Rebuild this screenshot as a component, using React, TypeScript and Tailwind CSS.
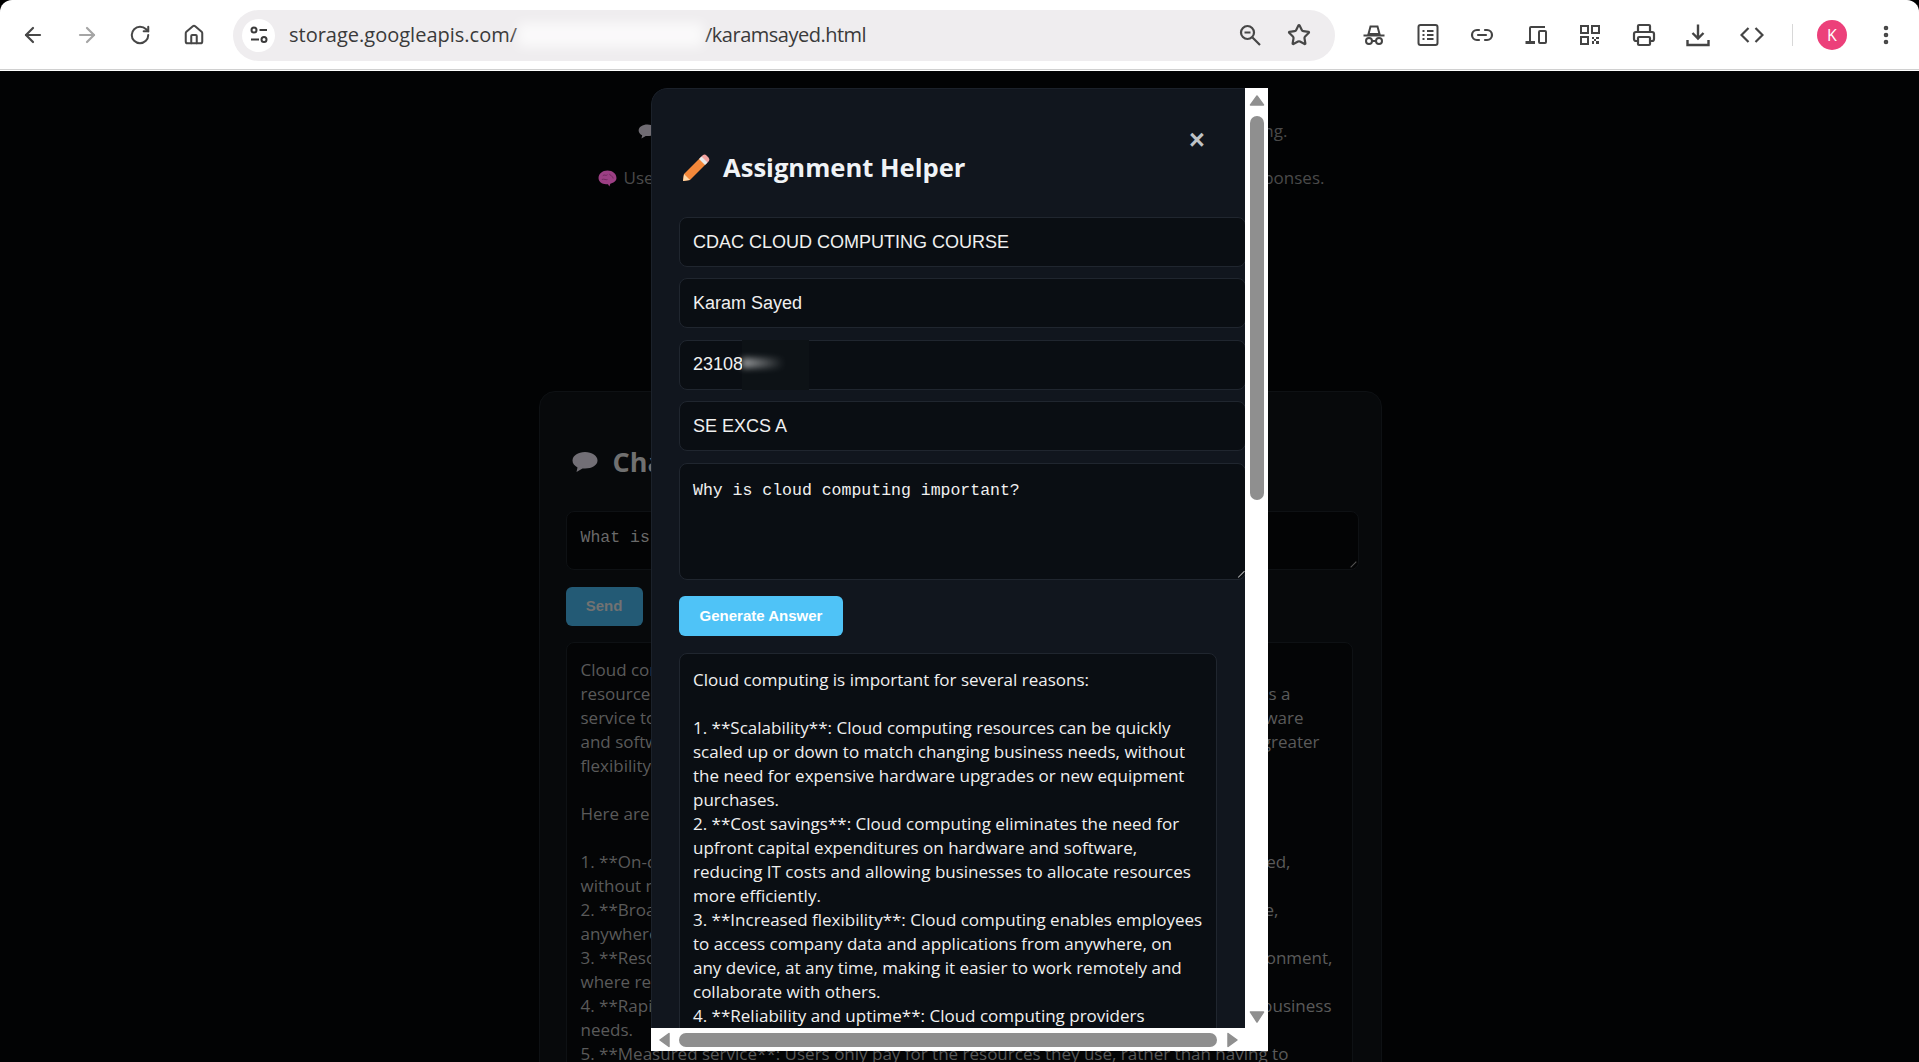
import React from 'react';
import { ArrowLeft, ArrowRight, RotateCw, Home, Star, Link2, Printer, EllipsisVertical } from 'lucide-react';

const sans = "font-['Open_Sans','Noto_Sans',sans-serif]";

// right = end of the line showing past the modal, inset = gap to the box's right edge
const chatLines: { left: string; right?: string; inset?: number }[] = [
  { left: 'Cloud computing' },
  { left: 'resources over', right: 'as a', inset: 47 },
  { left: 'service to users', right: 'ware', inset: 34 },
  { left: 'and software', right: 'greater', inset: 18 },
  { left: 'flexibility' },
  { left: '' },
  { left: 'Here are the' },
  { left: '' },
  { left: '1. **On-demand', right: 'ed,', inset: 47 },
  { left: 'without manual' },
  { left: '2. **Broad', right: 'e,', inset: 59 },
  { left: 'anywhere' },
  { left: '3. **Resource', right: 'onment,', inset: 5 },
  { left: 'where resources' },
  { left: '4. **Rapid', right: 'business', inset: 6 },
  { left: 'needs.' },
  { left: '5. **Measured service**: Users only pay for the resources they use, rather than having to' },
];

const answer = [
  'Cloud computing is important for several reasons:',
  '',
  '1. **Scalability**: Cloud computing resources can be quickly',
  'scaled up or down to match changing business needs, without',
  'the need for expensive hardware upgrades or new equipment',
  'purchases.',
  '2. **Cost savings**: Cloud computing eliminates the need for',
  'upfront capital expenditures on hardware and software,',
  'reducing IT costs and allowing businesses to allocate resources',
  'more efficiently.',
  '3. **Increased flexibility**: Cloud computing enables employees',
  'to access company data and applications from anywhere, on',
  'any device, at any time, making it easier to work remotely and',
  'collaborate with others.',
  '4. **Reliability and uptime**: Cloud computing providers',
];

function Bubble({ className }: { className: string }) {
  return (
    <svg viewBox="0 0 28 24" className={className}>
      <path d="M14 2C7 2 1.500 5.600 1.500 10.500c0 3 2 5.400 5 6.900L5.500 22l6-3.600c.8.100 1.700.100 2.500.100 7 0 12.500-3.400 12.500-8S21 2 14 2z" fill="#b9b3bd" />
    </svg>
  );
}

function Brain() {
  return (
    <svg viewBox="0 0 20 18" className="w-[19px] h-[17px]">
      <path d="M10 0.500C4.500 0.500 0.500 4 0.500 8.500c0 4 3.500 6.500 8 6.500h2l1.500 2.500 1-3c4-.8 6.500-3 6.500-6C19.500 4 15.500 0.500 10 0.500z" fill="#9c3f84" />
      <path d="M5 6c2-2 3 1 5-1M4 10c3-1 4 1 6 0M12 4c1 3 4 2 4 5" stroke="#6e2b5e" strokeWidth="1" fill="none" />
    </svg>
  );
}

function SiteSettings() {
  return (
    <svg viewBox="0 0 20 20" className="w-5 h-5" fill="none" stroke="#3a3a3a" strokeWidth="2">
      <circle cx="5" cy="5" r="2.500" />
      <path d="M10.500 5H18M2 14.500h8" />
      <circle cx="15" cy="14.500" r="2.500" />
    </svg>
  );
}

function ZoomMinus() {
  return (
    <svg viewBox="0 0 24 24" className="w-6 h-6" fill="none" stroke="#474747" strokeWidth="2.200">
      <circle cx="9.500" cy="9.500" r="6.500" />
      <path d="M6.500 9.500h6M14.500 14.500L22 22" />
    </svg>
  );
}

function Incognito() {
  return (
    <svg viewBox="0 0 24 24" className="w-6 h-6" fill="none" stroke="#444" strokeWidth="2">
      <path d="M8.500 3.500h7l2 7.500h-11z" />
      <path d="M1.500 12.500h21" />
      <circle cx="7" cy="18" r="3" />
      <circle cx="17" cy="18" r="3" />
      <path d="M10 18h4" />
    </svg>
  );
}

function ReadingList() {
  return (
    <svg viewBox="0 0 24 24" className="w-6 h-6" fill="none" stroke="#444" strokeWidth="2">
      <rect x="2.500" y="2" width="19" height="20" rx="2" />
      <path d="M6.500 8h2M11 8h6.500M6.500 12h2M11 12h6.500M6.500 16h2M11 16h6.500" />
    </svg>
  );
}

function Devices() {
  return (
    <svg viewBox="0 0 24 24" className="w-6 h-6" fill="none" stroke="#444" strokeWidth="2">
      <path d="M21 4H7a1 1 0 0 0-1 1v13" />
      <path d="M1.500 19.500H11" strokeWidth="3" />
      <rect x="15" y="8" width="7" height="12" rx="1" />
    </svg>
  );
}

function QrCode() {
  return (
    <svg viewBox="0 0 24 24" className="w-6 h-6" fill="none" stroke="#444" strokeWidth="2">
      <rect x="3" y="3" width="7" height="7" />
      <rect x="14" y="3" width="7" height="7" />
      <rect x="3" y="14" width="7" height="7" />
      <path d="M14 14h2v2h-2zM18 14h3v2h-3zM16 16h2v2h-2zM14 18h2v3h-2zM18 18h3v3h-3z" fill="#444" stroke="none" />
    </svg>
  );
}

function SaveIcon() {
  return (
    <svg viewBox="0 0 24 24" className="w-6 h-6" fill="none" stroke="#444" strokeWidth="2.400">
      <path d="M12 1.500V15M6.500 10l5.500 5.500 5.500-5.500" />
      <path d="M1.500 17v5h21v-5" />
    </svg>
  );
}

function CodeIcon() {
  return (
    <svg viewBox="0 0 24 24" className="w-6 h-6" fill="none" stroke="#444" strokeWidth="2.200">
      <path d="M8.500 5L1.500 12l7 7M15.500 5l7 7-7 7" />
    </svg>
  );
}

function Pencil() {
  return (
    <svg viewBox="0 0 28 28" className="w-[28px] h-[28px]">
      <path d="M2 20 L18 4 L24 10 L8 26 L1 27z" fill="#f4883a" />
      <path d="M18 4 L21 1 Q23 0 24.500 1.500 L26.500 3.500 Q28 5 27 7 L24 10z" fill="#f3a3a0" />
      <path d="M17 5 L19.500 2.500 L25.500 8.500 L23 11z" fill="#e8e8e8" />
      <path d="M2 20 L8 26 L1 27z" fill="#ffd8a8" />
    </svg>
  );
}

function ToolIcon({ children }: { children: React.ReactNode }) {
  return <div className="w-6 h-6 flex items-center justify-center text-[#444]">{children}</div>;
}

function Toolbar() {
  return (
    <div className="h-[71px] bg-white flex items-center rounded-t-xl border-b border-white shadow-[inset_0_-1px_0_#d0d0d0]">
      <div className="flex items-center gap-[30px] pl-[21px] text-[#474747]">
        <ArrowLeft className="w-6 h-6" strokeWidth={2.2} />
        <ArrowRight className="w-6 h-6 text-[#a5a5a5]" strokeWidth={2.2} />
        <RotateCw className="w-[22px] h-[22px]" strokeWidth={2.2} />
        <Home className="w-[22px] h-[22px] ml-[2px]" strokeWidth={2.2} />
      </div>
      <div className="relative ml-[28px] w-[1102px] h-[51px] rounded-full bg-[#efedef] flex items-center">
        <div className="ml-[9px] w-[33px] h-[33px] rounded-full bg-white flex items-center justify-center">
          <SiteSettings />
        </div>
        <span className="ml-[14px] text-[20px] text-[#3a3a3a] font-['Open_Sans',sans-serif] whitespace-nowrap">storage.googleapis.com/<span className="inline-block w-[188px]" /><span className="tracking-[-0.5px]">/karamsayed.html</span></span>
        <div className="absolute left-[285px] top-[13px] w-[185px] h-[24px] bg-white/70 blur-[6px]" />
        <div className="ml-auto mr-[24px] flex items-center gap-[25px] text-[#474747]">
          <ZoomMinus />
          <Star className="w-6 h-6" strokeWidth={2.2} />
        </div>
      </div>
      <div className="flex items-center gap-[30px] ml-[27px]">
        <ToolIcon><Incognito /></ToolIcon>
        <ToolIcon><ReadingList /></ToolIcon>
        <ToolIcon><Link2 className="w-6 h-6" strokeWidth={2.2} /></ToolIcon>
        <ToolIcon><Devices /></ToolIcon>
        <ToolIcon><QrCode /></ToolIcon>
        <ToolIcon><Printer className="w-6 h-6" strokeWidth={2.2} /></ToolIcon>
        <ToolIcon><SaveIcon /></ToolIcon>
        <ToolIcon><CodeIcon /></ToolIcon>
      </div>
      <div className="ml-[28px] w-px h-[22px] bg-[#d8d8d8]" />
      <div className="ml-[24px] w-[30px] h-[30px] rounded-full bg-[#ec407a] text-white text-[16px] flex items-center justify-center font-['Open_Sans',sans-serif]">K</div>
      <EllipsisVertical className="ml-[27px] w-6 h-6 text-[#444]" strokeWidth={2.6} />
    </div>
  );
}

function BackPage() {
  return (
    <div className={`h-[991px] overflow-hidden bg-[#020304] ${sans} flex flex-col items-center`}>
      <p className="mt-[48px] ml-[5px] text-[17px] leading-6 text-[#4a4a4a] flex items-center whitespace-nowrap w-[651px] justify-between">
        <span className="flex items-center gap-2"><Bubble className="w-[21px] h-[17px] opacity-60" /> Chat</span>
        <span>ing.</span>
      </p>
      <p className="mt-[23px] ml-[3px] text-[17px] leading-6 text-[#4a4a4a] flex items-center whitespace-nowrap w-[727px] justify-between">
        <span className="flex items-center gap-[7px]"><Brain /> Use</span>
        <span>ponses.</span>
      </p>
      <div className="mt-[201px] w-[843px] ml-[1px] flex-1 rounded-t-2xl border border-[#0e1114] bg-[#07090b] px-[26px] pt-[44px]">
        <div className="flex items-center gap-[14px] h-[52px] pl-[5px]">
          <Bubble className="w-[28px] h-[24px] opacity-60" />
          <span className="text-[27px] font-bold text-[#707070]">Chat</span>
        </div>
        <div className="relative mt-[23px] h-[59px] w-[793px] rounded-lg border border-[#0e1114] bg-[#030405] px-[14px] pt-[14px] leading-6 font-['Liberation_Mono',monospace] text-[16.5px] text-[#6a6a6a]">
          What is
          <div className="absolute right-[3px] bottom-[3px] w-[8px] h-[8px] border-b border-[#555] rotate-[-45deg]" />
        </div>
        <div className="mt-[17px] w-[77px] h-[39px] rounded-md bg-[#235a75] text-[#727272] text-[15px] font-bold flex items-center justify-center font-['Liberation_Sans',sans-serif]">Send</div>
        <div className="mt-[16px] w-[787px] h-[500px] rounded-lg border border-[#0e1114] bg-[#040506] pl-[14px] pt-[15px] text-[17px] leading-6 text-[#5a5a5a]">
          {chatLines.map((line, i) => (
            <div key={i} className="h-6 flex justify-between whitespace-nowrap">
              <span>{line.left}</span>
              {line.right && <span style={{ marginRight: line.inset! + 14 }}>{line.right}</span>}
            </div>
          ))}
        </div>
      </div>
    </div>
  );
}

function Field({ value }: { value: string }) {
  return (
    <div className="w-[567px] h-[50px] shrink-0 rounded-lg border border-[#20262f] bg-[#0a0e13] px-[13px] flex items-center text-[18px] text-[#f0f0f0] font-['Liberation_Sans',sans-serif] whitespace-nowrap">
      {value}
    </div>
  );
}

function ScrollArrow({ points }: { points: string }) {
  return (
    <svg viewBox="0 0 16 16" className="w-4 h-4 shrink-0" fill="#8f8f8f">
      <polygon points={points} stroke="#8f8f8f" strokeWidth="1.500" strokeLinejoin="round" />
    </svg>
  );
}

function Modal() {
  return (
    <div className="absolute left-[651px] top-[88px] w-[617px] h-[963px] flex flex-col rounded-tl-2xl overflow-hidden">
      <div className="flex-1 min-h-0 flex">
        <div className={`flex-1 min-w-0 bg-[#11161e] border-t border-l border-[#1b212a] rounded-tl-2xl overflow-hidden pl-[27px] ${sans}`}>
          <div className="h-[128px] relative">
            <span className="absolute left-[510px] top-[38px] text-[27px] leading-none font-bold text-[#bfc3c7] font-['Liberation_Sans',sans-serif]">×</span>
            <div className="absolute left-[3px] top-[65px]"><Pencil /></div>
            <h2 className="absolute left-[44px] top-[61px] text-[25.6px] leading-9 font-bold text-[#f0f3f6] whitespace-nowrap">Assignment Helper</h2>
          </div>
          <div className="flex flex-col gap-[11.4px] w-[600px]">
            <Field value="CDAC CLOUD COMPUTING COURSE" />
            <Field value="Karam Sayed" />
            <div className="relative">
              <Field value="23108" />
              <div className="absolute left-[63px] top-0 w-[67px] h-[50px] bg-[#0d1216]" />
              <div className="absolute left-[63px] top-[18px] w-[42px] h-[10px] bg-gradient-to-r from-white/60 to-transparent blur-[3px]" />
            </div>
            <Field value="SE EXCS A" />
            <div className="relative w-[567px] h-[117px] rounded-lg border border-[#20262f] bg-[#0a0e13] px-[13px] pt-[15px] text-[16.500px] leading-6 text-[#f0f0f0] font-['Liberation_Mono',monospace] whitespace-nowrap">
              Why is cloud computing important?
              <div className="absolute right-[2px] bottom-[3px] w-[9px] h-[9px] border-b border-[#bbb] rotate-[-45deg]" />
            </div>
          </div>
          <button className="mt-[16.5px] w-[164px] h-[40px] rounded-md bg-[#4fc3f7] text-white text-[15px] font-bold font-['Liberation_Sans',sans-serif]">Generate Answer</button>
          <div className="mt-[17px] w-[538px] h-[500px] rounded-lg border border-[#20262f] bg-[#0a0e13] px-[13px] pt-[14px] text-[17px] leading-6 text-[#f0f0f0]">
            {answer.map((line, i) => (
              <div key={i} className="h-6 whitespace-nowrap">{line}</div>
            ))}
          </div>
        </div>
        <div className="w-[23px] bg-white flex flex-col items-center pt-[4px] pb-[3px]">
          <ScrollArrow points="8,4 14.500,13 1.500,13" />
          <div className="mt-[8px] w-[14px] h-[384px] rounded-full bg-[#8f8f8f]" />
          <div className="flex-1" />
          <ScrollArrow points="1.500,3 14.500,3 8,13" />
        </div>
      </div>
      <div className="h-[23px] shrink-0 bg-white flex items-center px-[5px]">
        <ScrollArrow points="13,1.500 13,14.500 4,8" />
        <div className="ml-[7px] w-[538px] h-[14px] rounded-full bg-[#8f8f8f]" />
        <div className="ml-[8px]"><ScrollArrow points="3,1.500 3,14.500 12,8" /></div>
      </div>
    </div>
  );
}

export default function App() {
  return (
    <div className="relative w-[1919px] h-[1062px] overflow-hidden bg-black">
      <Toolbar />
      <BackPage />
      <Modal />
    </div>
  );
}
